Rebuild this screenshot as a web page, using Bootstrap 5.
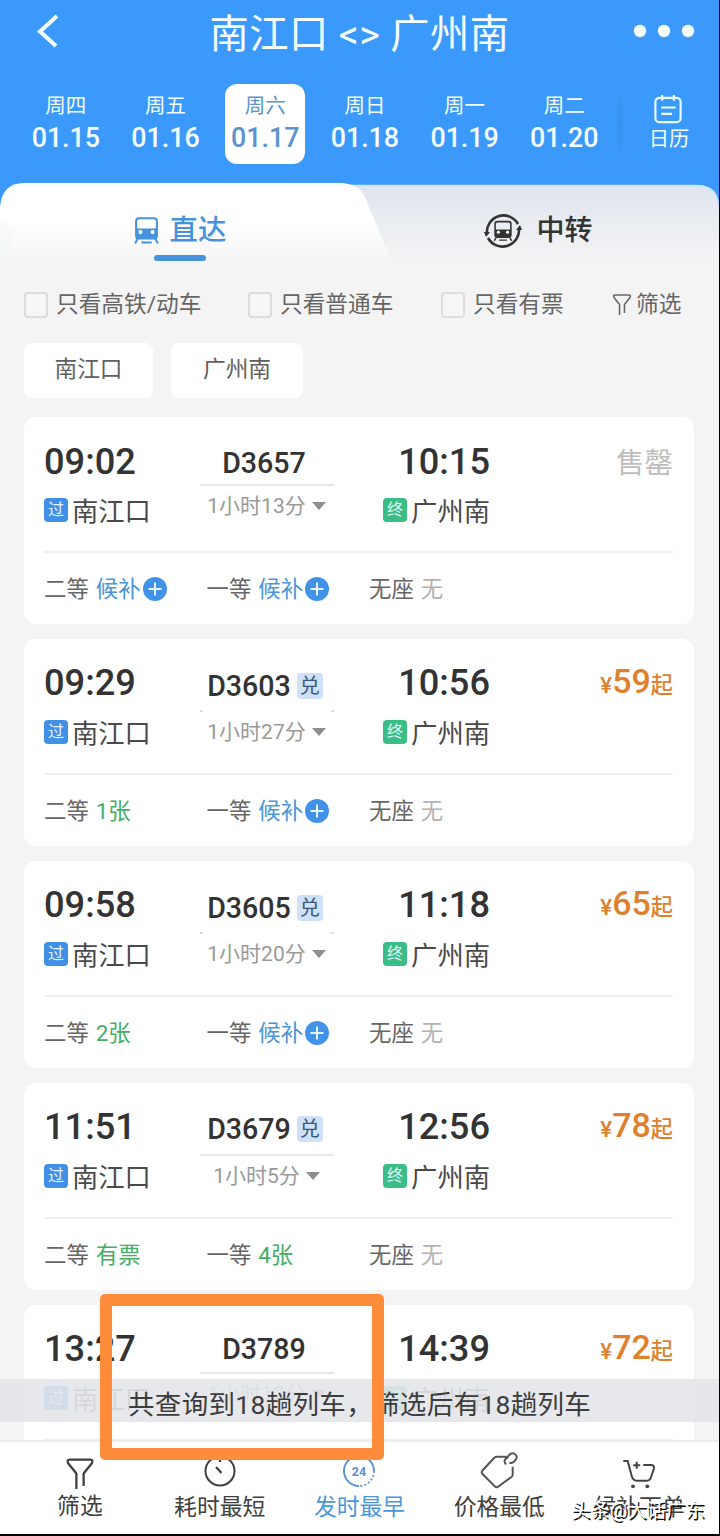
<!DOCTYPE html>
<html lang="zh-CN">
<head>
<meta charset="utf-8">
<meta name="viewport" content="width=device-width, initial-scale=1">
<title>南江口 - 广州南</title>
<link href="https://cdn.jsdelivr.net/npm/bootstrap@5.3.0/dist/css/bootstrap.min.css" rel="stylesheet">
<style>
  body{font-family:Roboto,"Noto Sans CJK SC",sans-serif;background:#000;color:#3a3a3a;height:1536px;overflow:hidden}
  svg{display:block;flex:none}
  .app{width:719px;height:1534px;background:#f4f4f4;overflow:hidden}
  .top{background:#3b99fb;height:183px;color:#f4ffff}
  .title-row{height:68px}
  .title-row h1{font-size:39.3px;line-height:70px;font-weight:400;letter-spacing:.4px}
  .dates{padding-left:16px;padding-top:16px}
  .day{width:99.7px}
  .day-in{width:80px;height:80px;border-radius:12px;padding-top:9px}
  .day-in.on{background:#fff;color:#5b93cd}
  .wk{font-size:20.5px;line-height:27px}
  .dt{font-size:26.8px;line-height:36px;font-weight:500}
  .cal{width:80px;margin-left:14px;padding-top:10px}
  .cal span{font-size:20.3px;line-height:31px;padding-left:2px}
  .dates{background:radial-gradient(ellipse 5px 34px at 620px 56px,#3590ee,transparent)}
  .tabs{height:80px;background:#3b99fb}
  .tab-bg{position:absolute;inset:0}
  .tab-l{width:360px;padding-top:29px;color:#4792dd;font-size:28.4px;line-height:38px;font-weight:500}
  .tab-r{width:359px;padding-top:29px;color:#333;font-size:28px;line-height:38px;font-weight:500}
  .tab-line{width:52px;height:6px;border-radius:3px;background:#4792dd;margin-top:5px}
  .filters{height:80px;padding:4px 0 0 24px;font-size:22.7px;color:#666}
  .box{width:24px;height:26px;border:2px solid #dcdcdc;border-radius:4px;background:#f6f6f6;margin-right:8px}
  .chip{height:55px;line-height:54px;background:#fff;border-radius:8px;font-size:22.7px;color:#606060;text-align:center}
  .trip{width:670px;height:207px;margin:0 0 15px 24px;background:#fff;border-radius:12px;padding:0 21px 0 20px}
  .journey{height:136px;border-bottom:2px solid #f0f0f0}
  .c1{width:140px;padding-top:22px}.c2{width:165px}.c3{width:141px}
  .c3{padding-top:22px}.c4{padding-top:19px}
  .time{font-size:36.2px;line-height:44px;font-weight:500;color:#333}
  .first .time{padding-top:1px;margin-bottom:-1px}
  .stn{font-size:26.3px;line-height:34px;margin-top:12px;color:#4a4a4a}
  .stn .tag{position:relative;top:-2px}
  .tag{width:24px;height:24px;border-radius:4px;background:#4290e6;color:#e6f6ff;font-size:16px;line-height:24px;text-align:center;margin-right:4px}
  .tag.end{background:#3bbd87}
  .no{font-size:28.6px;line-height:36px;font-weight:500;color:#333;margin-left:-5px}
  .no.with{margin-left:-3px}
  .dui{width:26px;height:26px;border-radius:4px;background:#cfe1f8;color:#3d5878;font-size:20px;line-height:27px;text-align:center;margin-left:6px;font-weight:400}
  .rule{width:134px;height:2px;background:#e8e8e8}
  .rule.gap-line{background:linear-gradient(90deg,#ddd 3px,transparent 3px 131px,#ddd 131px)}
  .dur{font-size:21px;line-height:30px;color:#999}
  .tri{border:7.5px solid transparent;border-top:8.5px solid #8e8e8e;border-bottom:0;margin-left:6px}
  .price{color:#dd812f;font-size:22.2px;line-height:46px;font-weight:500}
  .price b{font-size:34px;font-weight:500}
  .sold{font-size:28.5px;line-height:56px;color:#bdbdbd}
  .seats{height:70px;font-size:22.4px;color:#666}
  .seats>div{width:162.5px;padding-top:4px}
  .seats svg{margin:-2px 0 0 2px}
  .wait{color:#4b96d8}.ok{color:#45ad65}.none{color:#b2b2b2}
  .seats em{font-style:normal;margin-left:7px}
  .toast-bar{position:absolute;left:0;top:1379px;width:719px;height:43px;background:rgba(227,229,234,.9);font-size:26.5px;letter-spacing:.32px;line-height:51px;color:#3c3c3c;padding-left:128px;white-space:nowrap}
  .marker{position:absolute;left:100px;top:1294px;width:284px;height:166px;border:12px solid #ff8c3b;border-radius:5px}
  .bottom{position:absolute;left:0;top:1440px;width:719px;height:94px;background:#fff;border-top:2px solid #ededed;padding:9px 10px 0}
  .bottom>div{width:139.8px;font-size:22.8px;color:#404040}
  .bottom span{line-height:36px}
  .stamp{position:absolute;left:571px;top:1496px;font-size:19.4px;line-height:30px;color:#fff;text-shadow:1.5px 1.5px 0 #111;white-space:nowrap}
</style>
</head>
<body>
<svg width="0" height="0" class="position-absolute">
  <symbol id="train" viewBox="0 0 24 26"><path d="M5 1.200h14q3 0 3 3v14q0 2.500-3 2.500H5q-3 0-3-2.500v-14q0-3 3-3z" fill="none" stroke="currentColor" stroke-width="2"/><path d="M2 11h20v8q0 2-3 2H5q-3 0-3-2z" fill="currentColor"/><circle cx="6.200" cy="14.500" r="2" fill="#fff"/><circle cx="17.800" cy="14.500" r="2" fill="#fff"/><path d="M3.500 21l-2.500 4.500M20.500 21l2.500 4.500M7 24.500h10" stroke="currentColor" stroke-width="1.800"/></symbol>
  <symbol id="plus" viewBox="0 0 24 24"><circle cx="12" cy="12" r="12" fill="#4292e8"/><path d="M12 5.500v13M5.500 12h13" stroke="#e4f7ff" stroke-width="2"/></symbol>
  <symbol id="funnel" viewBox="0 0 26 30"><path d="M9.500 30V15L1.500 5Q0 1.500 3 1.500h20q3 0 1.500 3.500L16.500 15V27" fill="none" stroke="currentColor" stroke-width="2.200" stroke-linejoin="round"/></symbol>
</svg>
<div class="app position-relative">
  <header class="top">
    <div class="title-row position-relative d-flex justify-content-center">
      <svg class="position-absolute" style="left:36px;top:14px" width="24" height="34" viewBox="0 0 24 34"><path d="M21 2L4 17.500 20 32" fill="none" stroke="#f4ffff" stroke-width="4"/></svg>
      <h1 class="m-0">南江口 &lt;&gt; 广州南</h1>
      <svg class="position-absolute" style="left:633px;top:24px" width="62" height="14"><g fill="#f8ffff"><circle cx="7" cy="7" r="6.200"/><circle cx="31" cy="7" r="6.200"/><circle cx="55" cy="7" r="6.200"/></g></svg>
    </div>
    <div class="dates d-flex text-center">
      <div class="day d-flex justify-content-center"><div class="day-in"><div class="wk">周四</div><div class="dt">01.15</div></div></div>
      <div class="day d-flex justify-content-center"><div class="day-in"><div class="wk">周五</div><div class="dt">01.16</div></div></div>
      <div class="day d-flex justify-content-center"><div class="day-in on"><div class="wk">周六</div><div class="dt">01.17</div></div></div>
      <div class="day d-flex justify-content-center"><div class="day-in"><div class="wk">周日</div><div class="dt">01.18</div></div></div>
      <div class="day d-flex justify-content-center"><div class="day-in"><div class="wk">周一</div><div class="dt">01.19</div></div></div>
      <div class="day d-flex justify-content-center"><div class="day-in"><div class="wk">周二</div><div class="dt">01.20</div></div></div>
      <div class="cal d-flex flex-column align-items-center">
        <svg width="30" height="30" viewBox="0 0 30 31"><g fill="none" stroke="#e9ffff" stroke-width="2.200"><rect x="2" y="4" width="26" height="25" rx="4"/><path d="M9 1v6M21 1v6M8 14h15M8 20.500h11"/></g></svg>
        <span>日历</span>
      </div>
    </div>
  </header>

  <nav class="tabs position-relative d-flex">
    <svg class="tab-bg" width="719" height="80"><defs>
      <linearGradient id="g1" x2="0" y2="1"><stop stop-color="#dfe5ee"/><stop offset="1" stop-color="#f4f4f4"/></linearGradient>
      <linearGradient id="g2" x2="0" y2="1"><stop offset=".5" stop-color="#fff"/><stop offset="1" stop-color="#f5f5f5"/></linearGradient></defs>
      <path d="M300 2H697Q719 2 719 24V80H300z" fill="url(#g1)"/><path d="M350 2.500H697Q717 3 718.500 24" fill="none" stroke="#c5e5ff" stroke-width="1.500"/>
      <path d="M0 80V24Q2 0 24 0H340Q358 0 365 14L392 80z" fill="url(#g2)"/><path d="M0 36L17 44 4 76H0z" fill="#f4f5f6" opacity=".5"/></svg>
    <div class="tab-l position-relative d-flex flex-column align-items-center"><div class="d-flex align-items-center"><svg class="me-2" style="margin-top:-1px" width="25" height="27"><use href="#train"/></svg><span style="padding-left:3px">直达</span></div><div class="tab-line"></div></div>
    <div class="tab-r position-relative"><div class="d-flex align-items-center justify-content-center" style="margin-left:-2px">
      <svg width="38" height="38" viewBox="0 0 38 38"><g fill="none" stroke="#333" stroke-width="2.600"><path d="M3 22A16.600 16.600 0 0 1 34 12"/><path d="M35 16A16.600 16.600 0 0 1 4 26"/></g><path d="M0 20l6 0-4 5zM38 18l-6 0 4-5z" fill="#333"/><use href="#train" x="9.500" y="8" width="19" height="22"/></svg>
      <span style="padding-left:14px">中转</span></div></div>
  </nav>

  <div class="filters d-flex align-items-center">
    <div class="d-flex align-items-center" style="width:224px"><i class="box"></i>只看高铁/动车</div>
    <div class="d-flex align-items-center" style="width:193px"><i class="box"></i>只看普通车</div>
    <div class="d-flex align-items-center" style="width:171px"><i class="box"></i>只看有票</div>
    <div class="d-flex align-items-center"><svg class="me-1" width="20" height="21"><use href="#funnel"/></svg>筛选</div>
  </div>
  <div class="d-flex" style="padding-left:24px;gap:18px;margin-bottom:19px"><div class="chip" style="width:129px">南江口</div><div class="chip" style="width:132px">广州南</div></div>

  <main>
    <section class="trip first">
      <div class="journey d-flex">
        <div class="c1"><div class="time">09:02</div><div class="stn d-flex align-items-center"><span class="tag">过</span>南江口</div></div>
        <div class="c2 d-flex flex-column align-items-center" style="padding-top:28px"><div class="no">D3657</div><div class="rule" style="margin-top:3px"></div><div class="dur d-flex align-items-center" style="margin-top:5px">1小时13分<i class="tri"></i></div></div>
        <div class="c3 d-flex flex-column align-items-end"><div class="time">10:15</div><div class="stn d-flex align-items-center"><span class="tag end">终</span>广州南</div></div>
        <div class="c4 ms-auto"><div class="sold">售罄</div></div>
      </div>
      <div class="seats d-flex align-items-center"><div class="d-flex align-items-center">二等<em class="wait">候补</em><svg width="24" height="24"><use href="#plus"/></svg></div><div class="d-flex align-items-center">一等<em class="wait">候补</em><svg width="24" height="24"><use href="#plus"/></svg></div><div>无座<em class="none">无</em></div></div>
    </section>
    <section class="trip">
      <div class="journey d-flex">
        <div class="c1"><div class="time">09:29</div><div class="stn d-flex align-items-center"><span class="tag">过</span>南江口</div></div>
        <div class="c2 d-flex flex-column align-items-center" style="padding-top:29px"><div class="no with d-flex align-items-center">D3603<span class="dui">兑</span></div><div class="rule gap-line" style="margin-top:6px"></div><div class="dur d-flex align-items-center" style="margin-top:5px">1小时27分<i class="tri"></i></div></div>
        <div class="c3 d-flex flex-column align-items-end"><div class="time">10:56</div><div class="stn d-flex align-items-center"><span class="tag end">终</span>广州南</div></div>
        <div class="c4 ms-auto"><div class="price">¥<b>59</b>起</div></div>
      </div>
      <div class="seats d-flex align-items-center"><div>二等<em class="ok">1张</em></div><div class="d-flex align-items-center">一等<em class="wait">候补</em><svg width="24" height="24"><use href="#plus"/></svg></div><div>无座<em class="none">无</em></div></div>
    </section>
    <section class="trip">
      <div class="journey d-flex">
        <div class="c1"><div class="time">09:58</div><div class="stn d-flex align-items-center"><span class="tag">过</span>南江口</div></div>
        <div class="c2 d-flex flex-column align-items-center" style="padding-top:29px"><div class="no with d-flex align-items-center">D3605<span class="dui">兑</span></div><div class="rule gap-line" style="margin-top:6px"></div><div class="dur d-flex align-items-center" style="margin-top:5px">1小时20分<i class="tri"></i></div></div>
        <div class="c3 d-flex flex-column align-items-end"><div class="time">11:18</div><div class="stn d-flex align-items-center"><span class="tag end">终</span>广州南</div></div>
        <div class="c4 ms-auto"><div class="price">¥<b>65</b>起</div></div>
      </div>
      <div class="seats d-flex align-items-center"><div>二等<em class="ok">2张</em></div><div class="d-flex align-items-center">一等<em class="wait">候补</em><svg width="24" height="24"><use href="#plus"/></svg></div><div>无座<em class="none">无</em></div></div>
    </section>
    <section class="trip">
      <div class="journey d-flex">
        <div class="c1"><div class="time">11:51</div><div class="stn d-flex align-items-center"><span class="tag">过</span>南江口</div></div>
        <div class="c2 d-flex flex-column align-items-center" style="padding-top:28px"><div class="no with d-flex align-items-center">D3679<span class="dui">兑</span></div><div class="rule" style="margin-top:7px"></div><div class="dur d-flex align-items-center" style="margin-top:5px">1小时5分<i class="tri"></i></div></div>
        <div class="c3 d-flex flex-column align-items-end"><div class="time">12:56</div><div class="stn d-flex align-items-center"><span class="tag end">终</span>广州南</div></div>
        <div class="c4 ms-auto"><div class="price">¥<b>78</b>起</div></div>
      </div>
      <div class="seats d-flex align-items-center"><div>二等<em class="ok">有票</em></div><div>一等<em class="ok">4张</em></div><div>无座<em class="none">无</em></div></div>
    </section>
    <section class="trip">
      <div class="journey d-flex">
        <div class="c1"><div class="time">13:27</div><div class="stn d-flex align-items-center"><span class="tag">过</span>南江口</div></div>
        <div class="c2 d-flex flex-column align-items-center" style="padding-top:26px"><div class="no">D3789</div><div class="rule" style="margin-top:5px"></div><div class="dur d-flex align-items-center" style="margin-top:5px">1小时12分<i class="tri"></i></div></div>
        <div class="c3 d-flex flex-column align-items-end"><div class="time">14:39</div><div class="stn d-flex align-items-center"><span class="tag end">终</span>广州南</div></div>
        <div class="c4 ms-auto"><div class="price">¥<b>72</b>起</div></div>
      </div>
    </section>
  </main>

  <div class="toast-bar">共查询到18趟列车，筛选后有18趟列车</div>
  <footer class="bottom d-flex text-center">
    <div class="d-flex flex-column align-items-center"><svg style="margin:7px 0 0" width="28" height="31"><use href="#funnel"/></svg><span>筛选</span></div>
    <div class="d-flex flex-column align-items-center"><svg style="margin-bottom:1px" width="40" height="38" viewBox="0 0 40 38"><circle cx="20" cy="20" r="14.500" fill="none" stroke="#404040" stroke-width="2"/><path d="M20 6v5M16 16l5.500 6" stroke="#404040" stroke-width="2.200"/></svg><span>耗时最短</span></div>
    <div class="d-flex flex-column align-items-center"><svg style="margin-bottom:1px" width="40" height="38" viewBox="0 0 40 38"><path d="M20 35A15 15 0 1 1 35 20" fill="none" stroke="#5b93cd" stroke-width="2"/><path d="M35 20A15 15 0 0 1 20 35" fill="none" stroke="#5b93cd" stroke-width="1.800" stroke-dasharray="2 2"/><text x="20" y="24.500" text-anchor="middle" font-size="12.500" font-weight="700" fill="#5b8fce">24</text></svg><span class="wait">发时最早</span></div>
    <div class="d-flex flex-column align-items-center"><svg style="margin-bottom:1px" width="40" height="38" viewBox="0 0 40 38"><path d="M27.700 5.700H17.500Q16 5.700 15 7L3.500 19.500Q2 21.300 3.500 23L16 35.500Q17.700 37 19.400 35.500L32.500 26Q33.700 25 33.700 23.500V15.700M27 13.500Q23.500 9 28.500 6.500Q31 1.500 35 2.500Q39.500 5 36.500 9Q34 13 30.500 11.500" fill="none" stroke="#555" stroke-width="2"/></svg><span>价格最低</span></div>
    <div class="d-flex flex-column align-items-center"><svg style="margin-bottom:1px" width="36" height="38" viewBox="0 0 36 38"><path d="M2.300 10H6.700L10.700 25Q12 29.700 15.700 29.700H26.300Q29 29.700 30 26.300L33 17.300Q33.500 14 29.700 14H22.300M15.700 10.800v7M12.200 14.300h7" fill="none" stroke="#444" stroke-width="2"/><circle cx="12" cy="35.300" r="1.900" fill="#444"/><circle cx="26.300" cy="35.300" r="1.900" fill="#444"/></svg><span>候补下单</span></div>
  </footer>
  <div class="marker"></div>
  <div class="stamp">头条@大话广东</div>
</div>
<script src="https://cdn.jsdelivr.net/npm/bootstrap@5.3.0/dist/js/bootstrap.bundle.min.js"></script>
</body>
</html>
